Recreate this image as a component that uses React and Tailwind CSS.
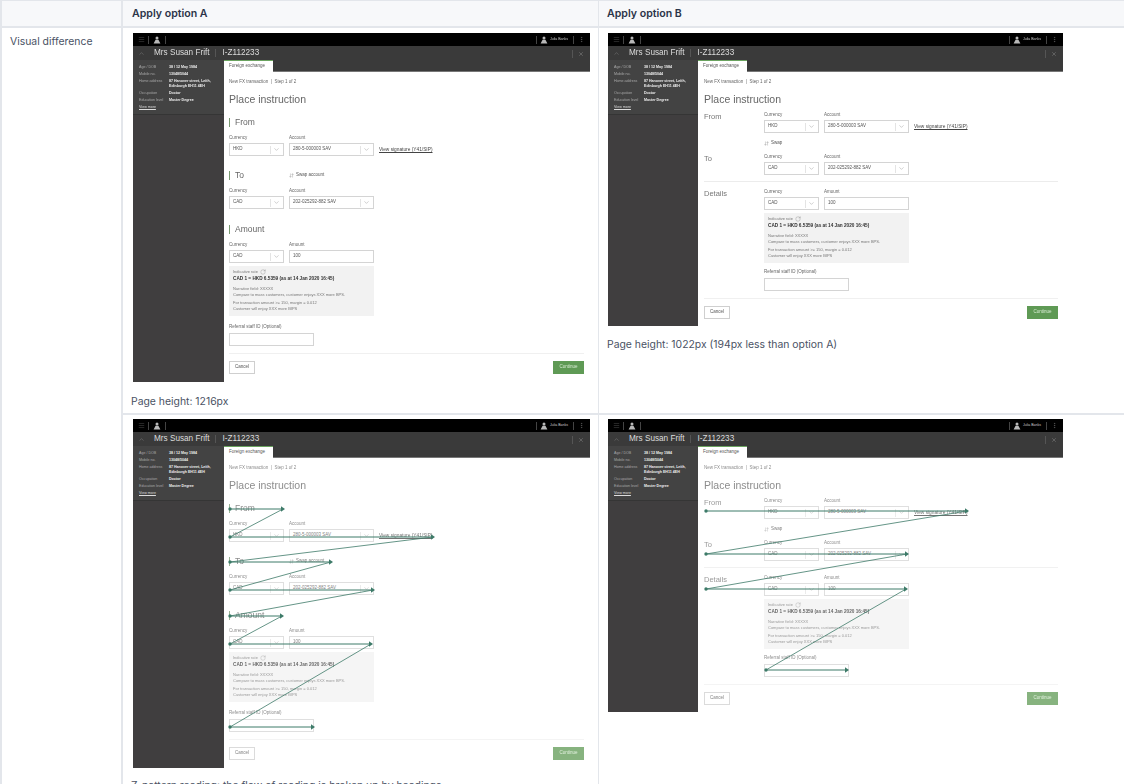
import { ArrowDownUp, ChevronDown, ChevronUp, Menu, MoreVertical, RotateCw, X } from "lucide-react";

const arrowsA = [
  [97, 90, 150, 90],
  [97, 118, 300, 118],
  [97, 143, 198, 143],
  [97, 171, 240, 171],
  [97, 197, 149, 197],
  [97, 225, 238, 225],
  [97, 308, 180, 308],
];

const arrowsB = [
  [98, 92, 359, 92],
  [98, 135, 299, 135],
  [98, 170, 298, 170],
  [158, 251, 239, 251],
];

const sideRows = [
  { label: "Age / DOB", value: "38 / 12 May 1984" },
  { label: "Mobile no.", value: "13048/5044" },
  { label: "Home address", value: "87 Hanover street, Leith, Edinburgh EH11 4EH" },
  { label: "Occupation", value: "Doctor" },
  { label: "Education level", value: "Master Degree" },
];

const Person = ({ color = "#b8b8b8" }) => (
  <svg width="8" height="8" viewBox="0 0 8 8" fill={color}>
    <circle cx="4" cy="2" r="1.5" />
    <path d="M2.6 3.8h2.8L7.4 7.6H.6z" />
  </svg>
);

const Arrows = ({ lines }) => (
  <svg className="absolute inset-0 w-full h-full pointer-events-none">
    {lines.map(([x1, y1, x2, y2], i) => {
      const next = lines[i + 1];
      return (
        <g key={i}>
          <circle cx={x1} cy={y1} r="1.7" fill="#3d7a68" />
          <line x1={x1} y1={y1} x2={x2} y2={y2} stroke="#3d7a68" strokeWidth="1" />
          <path d={`M${x2 + 2} ${y2}l-4 -2.8v5.6z`} fill="#3d7a68" />
          {next && <line x1={x2} y1={y2} x2={next[0]} y2={next[1]} stroke="#3d7a68" strokeWidth="0.8" />}
        </g>
      );
    })}
  </svg>
);

const Label = ({ children }) => (
  <div className="h-[6px] leading-[6px] text-[4.5px] text-[#666] whitespace-nowrap">{children}</div>
);

const Select = ({ value, width }) => (
  <div className={`${width} h-[13px] flex items-center justify-between border border-[#d4d4d4] bg-white text-[4.5px] text-[#555] pl-[3px] pr-[3px] shrink-0`}>
    <span className="whitespace-nowrap">{value}</span>
    <span className="flex items-center gap-[2px]">
      <span className="w-px h-[8px] bg-[#e4e4e4]" />
      <ChevronDown size={7} strokeWidth={1.2} className="text-[#777]" />
    </span>
  </div>
);

const TextBox = ({ value, width }) => (
  <div className={`${width} h-[13px] flex items-center border border-[#d4d4d4] bg-white text-[4.5px] text-[#555] pl-[3px] shrink-0`}>
    {value}
  </div>
);

const RateBox = () => (
  <div className="w-[145px] h-[50px] bg-[#f2f2f2] px-[4px] pt-[3px] text-[4px] leading-[6px] text-[#777]">
    <div className="flex items-center gap-[2px]">
      Indicative rate <RotateCw size={6} strokeWidth={1} className="text-[#555]" />
    </div>
    <div className="mt-px text-[4.7px] font-bold whitespace-nowrap text-[#333]">
      CAD 1 = HKD 6.5359 (as at 14 Jan 2020 16:45)
    </div>
    <div className="mt-[4px]">Narrative field: XXXXX</div>
    <div className="whitespace-nowrap">Compare to mass customers, customer enjoys XXX more BPS.</div>
    <div className="mt-[2px] whitespace-nowrap">For transaction amount &gt;= 150, margin = 0.012</div>
    <div className="whitespace-nowrap">Customer will enjoy XXX more BIPS</div>
  </div>
);

const Heading = ({ children }) => (
  <div className="flex items-center gap-[5px] h-[10px]">
    <span className="w-px h-[9px] bg-[#7a9a72]" />
    <span className="text-[8.5px] leading-[10px] text-[#666]">{children}</span>
  </div>
);

const CurrencyAccount = ({ currency, account, extra }) => (
  <div>
    <div className="flex gap-[5px]">
      <div className="w-[55px]"><Label>Currency</Label></div>
      <Label>Account</Label>
    </div>
    <div className="flex items-center gap-[5px] mt-[2px]">
      <Select value={currency} width="w-[55px]" />
      <Select value={account} width="w-[85px]" />
      {extra && (
        <span className="text-[4.8px] text-[#444] underline whitespace-nowrap">View signature (Y41/SIP)</span>
      )}
    </div>
  </div>
);

const AmountFields = () => (
  <div>
    <div className="flex gap-[5px]">
      <div className="w-[55px]"><Label>Currency</Label></div>
      <Label>Amount</Label>
    </div>
    <div className="flex items-center gap-[5px] mt-[2px]">
      <Select value="CAD" width="w-[55px]" />
      <TextBox value="100" width="w-[85px]" />
    </div>
  </div>
);

const Referral = () => (
  <div>
    <Label>Referral staff ID (Optional)</Label>
    <div className="mt-[3px]"><TextBox width="w-[85px]" /></div>
  </div>
);

const Footer = () => (
  <div className="mt-[7px] flex justify-between">
    <div className="w-[26px] h-[13px] flex items-center justify-center border border-[#cfcfcf] bg-white text-[4.5px] text-[#555]">Cancel</div>
    <div className="w-[31px] h-[13px] flex items-center justify-center bg-[#5f9a55] text-[4.5px] text-[#d9ecd4]">Continue</div>
  </div>
);

const FormA = () => (
  <>
    <div className="mt-[11px]"><Heading>From</Heading></div>
    <div className="mt-[8px]"><CurrencyAccount currency="HKD" account="280-5-000003 SAV" extra /></div>
    <div className="mt-[14px] flex">
      <div className="w-[60px]"><Heading>To</Heading></div>
      <div className="flex items-center gap-[2px] text-[4.5px] text-[#555]">
        <ArrowDownUp size={5} strokeWidth={1.2} /> Swap account
      </div>
    </div>
    <div className="mt-[8px]"><CurrencyAccount currency="CAD" account="202-025292-882 SAV" /></div>
    <div className="mt-[15px]"><Heading>Amount</Heading></div>
    <div className="mt-[8px]"><AmountFields /></div>
    <div className="mt-[3px]"><RateBox /></div>
    <div className="mt-[8px]"><Referral /></div>
    <div className="mt-[7px] h-px bg-[#f0f0f0]" />
  </>
);

const SideLabel = ({ children }) => (
  <div className="w-[60px] shrink-0 text-[7.5px] leading-[10px] text-[#777]">{children}</div>
);

const FormB = () => (
  <>
    <div className="mt-[6px] flex">
      <SideLabel>From</SideLabel>
      <div>
        <CurrencyAccount currency="HKD" account="280-5-000003 SAV" extra />
        <div className="mt-[7px] h-[6px] flex items-center gap-[2px] text-[4.5px] text-[#555]">
          <ArrowDownUp size={5} strokeWidth={1.2} /> Swap
        </div>
      </div>
    </div>
    <div className="mt-[8px] flex">
      <SideLabel>To</SideLabel>
      <CurrencyAccount currency="CAD" account="202-025292-882 SAV" />
    </div>
    <div className="mt-[6px] h-px bg-[#ececec]" />
    <div className="mt-[7px] flex">
      <SideLabel>Details</SideLabel>
      <div>
        <AmountFields />
        <div className="mt-[3px]"><RateBox /></div>
        <div className="mt-[6px]"><Referral /></div>
      </div>
    </div>
    <div className="mt-[7px] h-px bg-[#f0f0f0]" />
  </>
);

const Mock = ({ variant, faded, sizes, lines }) => (
  <div className={`relative flex flex-col overflow-hidden blur-[0.5px] font-['Liberation_Sans',sans-serif] ${sizes}`}>
    <div className="h-[13px] bg-black flex items-center justify-between shrink-0 text-[#888]">
      <div className="flex items-center">
        <Menu size={7} strokeWidth={1} className="ml-[5px]" />
        <span className="ml-[3px] w-px h-[8px] bg-[#444]" />
        <span className="ml-[4px]"><Person /></span>
        <span className="ml-[4px] w-px h-[8px] bg-[#444]" />
      </div>
      <div className="flex items-center">
        <span className="w-px h-[8px] bg-[#444]" />
        <span className="ml-[3px]"><Person /></span>
        <span className="ml-[2px] text-[3.5px] text-[#ccc] whitespace-nowrap">Julia Banks</span>
        <span className="ml-[5px] w-px h-[8px] bg-[#444]" />
        <MoreVertical size={7} strokeWidth={1.2} className="ml-[4px] mr-[5px]" />
      </div>
    </div>
    <div className="h-[14px] pt-px bg-[#3a3a3a] flex items-center justify-between shrink-0 text-[#ddd]">
      <div className="flex items-center">
        <ChevronUp size={7} strokeWidth={1} className="ml-[5px] text-[#aaa]" />
        <span className="ml-[9px] text-[8.2px] whitespace-nowrap">Mrs Susan Frift</span>
        <span className="ml-[5px] w-px h-[8px] bg-[#555]" />
        <span className="ml-[7px] text-[8.2px] whitespace-nowrap">I-Z112233</span>
      </div>
      <div className="flex items-center">
        <span className="w-px h-[8px] bg-[#555]" />
        <X size={6} strokeWidth={1.2} className="ml-[5px] mr-[6px] text-[#bbb]" />
      </div>
    </div>
    <div className="flex flex-1 min-h-0">
      <div className={`shrink-0 bg-[#403e3f] ${variant === "a" ? "w-[91px]" : "w-[90px]"}`}>
        <div className="h-[55px] border-b border-[#353535] bg-[#434343] pt-[5px] pl-[6px] text-[3.6px] leading-[4.5px]">
          <div className="flex flex-col gap-[2.6px]">
            {sideRows.map((row) => (
              <div key={row.label} className="flex">
                <span className="w-[30px] shrink-0 text-[#a8a8a8]">{row.label}</span>
                <span className="w-[45px] font-bold text-[#eee]">{row.value}</span>
              </div>
            ))}
            <span className="text-[#ddd] underline">View more</span>
          </div>
        </div>
      </div>
      <div className="flex-1 min-w-0 flex flex-col bg-white">
        <div className="h-[12px] bg-[#3a3a3a] shrink-0 border-b border-[#777]">
          <div className="w-[49px] h-[12px] bg-white border-t border-[#6aa35f] pl-[5px] text-[4.5px] leading-[10px] text-[#555] whitespace-nowrap">
            Foreign exchange
          </div>
        </div>
        <div className={`pl-[5px] ${variant === "a" ? "pr-[6px]" : "pl-[6px] pr-[5px]"} ${faded ? "opacity-75" : ""}`}>
          <div className="mt-[7px] h-[6px] leading-[6px] text-[4.5px] text-[#666] whitespace-nowrap">
            New FX transaction &nbsp;|&nbsp; Step 1 of 2
          </div>
          <div className="mt-[7px] h-[14px] leading-[14px] text-[10.5px] text-[#666] whitespace-nowrap">Place instruction</div>
          {variant === "a" ? <FormA /> : <FormB />}
          <Footer />
        </div>
      </div>
    </div>
    {lines && <Arrows lines={lines} />}
  </div>
);

const Caption = ({ children, className = "mt-[12px]" }) => (
  <p className={`${className} text-[10.4px] leading-4 text-[#4a5264] whitespace-nowrap`}>{children}</p>
);

export default function App() {
  return (
    <div className="h-screen overflow-hidden bg-white font-['Inter',sans-serif] blur-[0.25px]">
      <div className="h-[784px] grid grid-cols-[121px_476px_1fr] grid-rows-[27px_387px_1fr] border-l-2 border-t border-[#e3e6eb]">
        <div className="bg-[#f7f8fa] border-b-2 border-r-2 border-[#e3e6eb]" />
        <div className="bg-[#f7f8fa] border-b-2 border-r border-[#e3e6eb] pl-[9px] flex items-center text-[10.6px] font-semibold text-[#2b3448]">
          Apply option A
        </div>
        <div className="bg-[#f7f8fa] border-b-2 border-[#e3e6eb] pl-2 flex items-center text-[10.6px] font-semibold text-[#2b3448]">
          Apply option B
        </div>

        <div className="row-span-2 border-r-2 border-[#e3e6eb] pl-2 pt-[6px] text-[10.4px] leading-4 text-[#4a5264]">
          Visual difference
        </div>
        <div className="border-b-2 border-r border-[#e3e6eb] pl-2 pt-[5px]">
          <Mock variant="a" sizes="w-[457px] h-[349px] ml-[2px]" />
          <Caption>Page height: 1216px</Caption>
        </div>
        <div className="border-b-2 border-[#e3e6eb] pl-2 pt-[5px]">
          <Mock variant="b" sizes="w-[455px] h-[293px] ml-px" />
          <Caption className="mt-[11px]">Page height: 1022px (194px less than option A)</Caption>
        </div>

        <div className="border-r border-[#e3e6eb] pl-2 pt-[4px]">
          <Mock variant="a" faded sizes="w-[457px] h-[349px] ml-[2px]" lines={arrowsA} />
          <Caption className="mt-[10px]">Z-pattern reading: the flow of reading is broken up by headings</Caption>
        </div>
        <div className="pl-2 pt-[4px]">
          <Mock variant="b" faded sizes="w-[455px] h-[293px] ml-px" lines={arrowsB} />
        </div>
      </div>
    </div>
  );
}
